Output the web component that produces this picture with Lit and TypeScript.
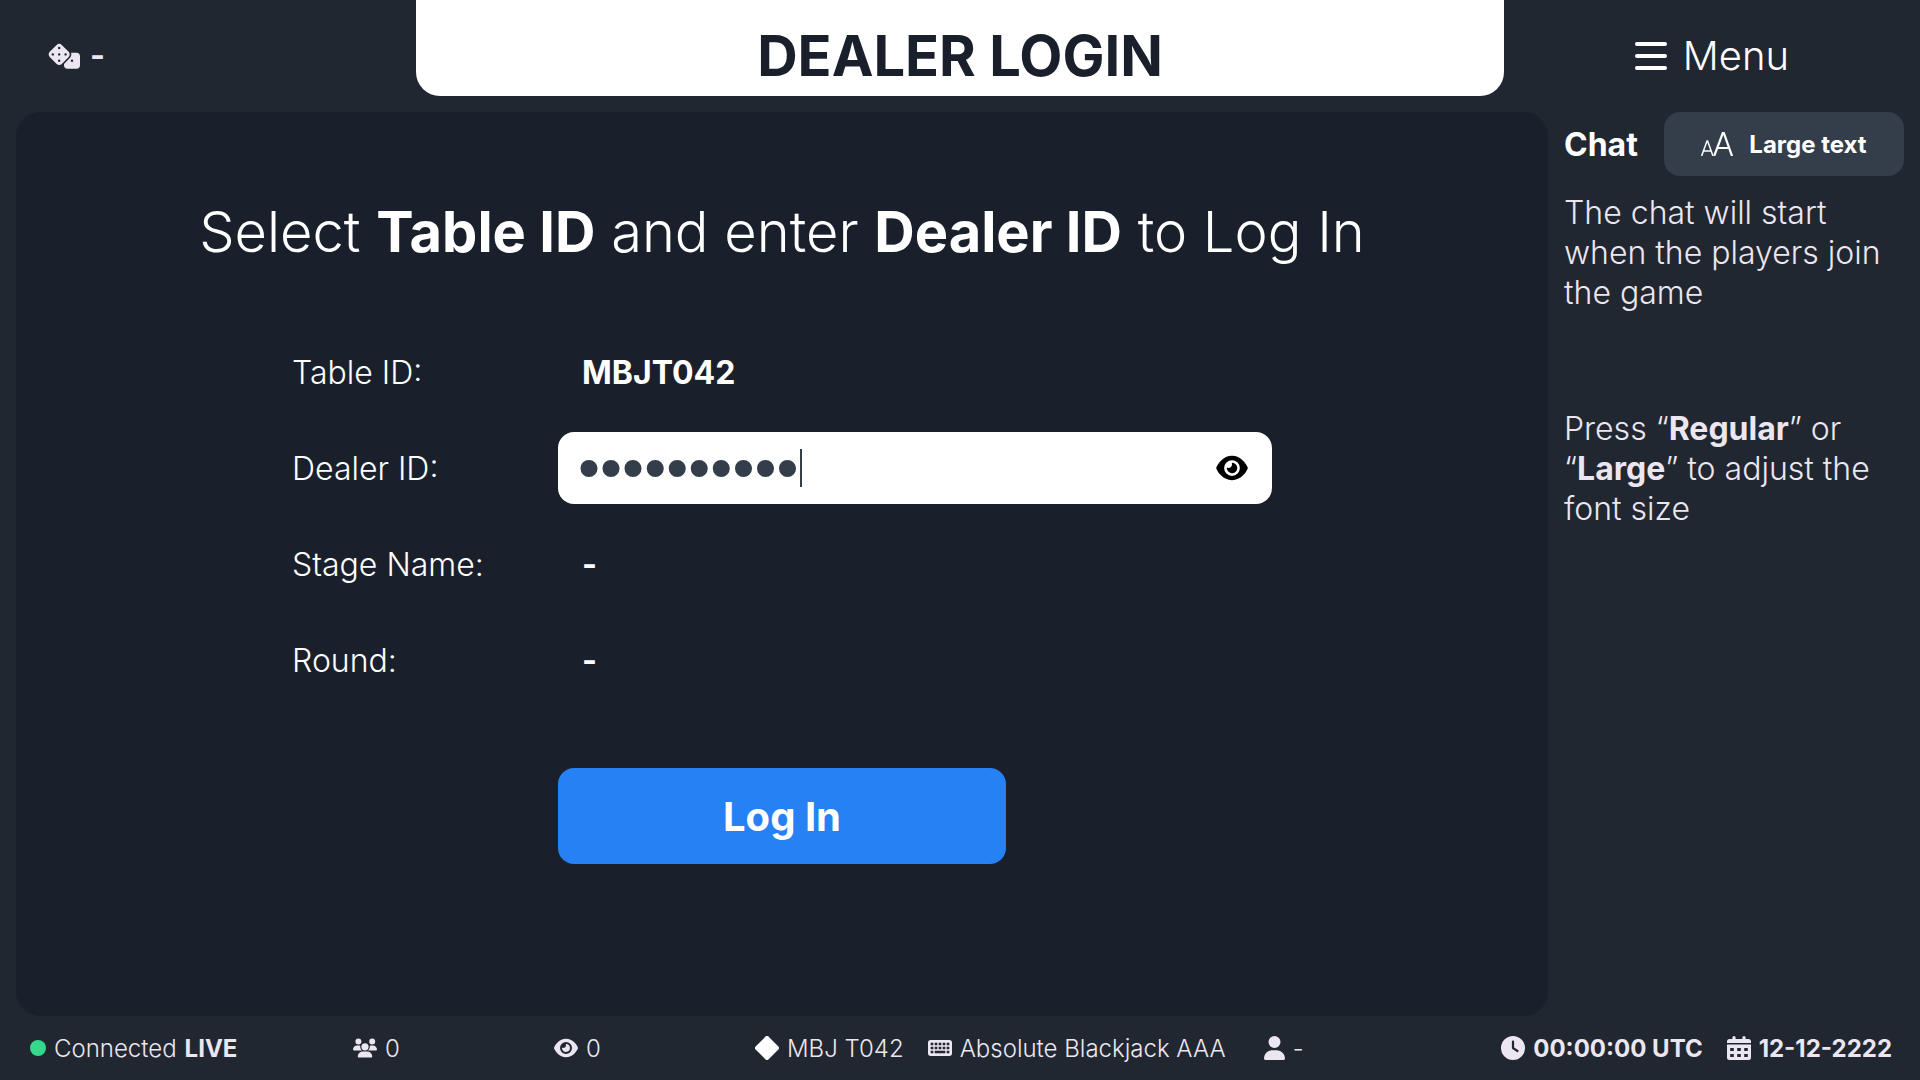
import { LitElement, html, css, svg } from "lit";
import { customElement, state } from "lit/decorators.js";

const eye = svg`<path d="M288 32c-80.8 0-145.5 36.8-192.6 80.6C48.6 156 17.3 208 2.5 243.7c-3.3 7.9-3.3 16.7 0 24.6C17.3 304 48.6 356 95.4 399.4C142.5 443.2 207.2 480 288 480s145.5-36.8 192.6-80.6c46.8-43.5 78.1-95.4 93-131.1c3.3-7.9 3.3-16.7 0-24.6c-14.9-35.7-46.2-87.7-93-131.1C433.5 68.8 368.8 32 288 32zM144 256a144 144 0 1 1 288 0 144 144 0 1 1 -288 0zm144-64c0 35.3-28.7 64-64 64c-7.1 0-13.9-1.2-20.3-3.3c-5.5-1.8-11.9 1.6-11.7 7.4c.3 6.9 1.3 13.8 3.2 20.7c13.7 51.2 66.4 81.6 117.6 67.9s81.6-66.4 67.9-117.6c-11.1-41.5-47.8-69.4-88.6-71.1c-5.8-.2-9.2 6.1-7.4 11.7c2.1 6.4 3.3 13.2 3.3 20.3z"/>`;
const dice = svg`<path d="M274.9 34.3c-28.1-28.1-73.7-28.1-101.8 0L34.3 173.1c-28.1 28.1-28.1 73.7 0 101.8L173.1 413.7c28.1 28.1 73.7 28.1 101.8 0L413.7 274.9c28.1-28.1 28.1-73.7 0-101.8L274.9 34.3zM200 224a24 24 0 1 1 48 0 24 24 0 1 1 -48 0zM96 200a24 24 0 1 1 0 48 24 24 0 1 1 0-48zM224 376a24 24 0 1 1 0-48 24 24 0 1 1 0 48zM352 200a24 24 0 1 1 0 48 24 24 0 1 1 0-48zM224 120a24 24 0 1 1 0-48 24 24 0 1 1 0 48zm96 328c0 35.3 28.7 64 64 64l192 0c35.3 0 64-28.7 64-64l0-192c0-35.3-28.7-64-64-64l-114.3 0c11.6 36 3.1 77-25.4 105.5L320 413.8l0 34.2zM480 328a24 24 0 1 1 0 48 24 24 0 1 1 0-48z"/>`;
const users = svg`<path d="M144 0a80 80 0 1 1 0 160A80 80 0 1 1 144 0zM512 0a80 80 0 1 1 0 160A80 80 0 1 1 512 0zM0 298.7C0 239.8 47.8 192 106.7 192l42.7 0c15.9 0 31 3.5 44.6 9.7c-1.3 7.2-1.9 14.7-1.9 22.3c0 38.2 16.8 72.5 43.3 96c-.2 0-.4 0-.7 0L21.3 320C9.6 320 0 310.4 0 298.7zM405.3 320c-.2 0-.4 0-.7 0c26.6-23.5 43.3-57.8 43.3-96c0-7.6-.7-15-1.9-22.3c13.6-6.3 28.7-9.7 44.6-9.7l42.7 0C592.2 192 640 239.8 640 298.7c0 11.8-9.6 21.3-21.3 21.3l-213.3 0zM224 224a96 96 0 1 1 192 0 96 96 0 1 1 -192 0zM128 485.3C128 411.7 187.7 352 261.3 352l117.3 0C452.3 352 512 411.7 512 485.3c0 14.7-11.9 26.7-26.7 26.7l-330.7 0c-14.7 0-26.7-11.9-26.7-26.7z"/>`;
const clock = svg`<path d="M256 0a256 256 0 1 1 0 512A256 256 0 1 1 256 0zM232 120l0 136c0 8 4 15.5 10.7 20l96 64c11 7.4 25.9 4.4 33.3-6.7s4.4-25.9-6.7-33.3L280 243.2 280 120c0-13.3-10.7-24-24-24s-24 10.7-24 24z"/>`;
const user = svg`<path d="M224 256A128 128 0 1 0 224 0a128 128 0 1 0 0 256zm-45.7 48C79.8 304 0 383.8 0 482.3C0 498.7 13.3 512 29.7 512l388.6 0c16.4 0 29.7-13.3 29.7-29.7C448 383.8 368.2 304 269.7 304l-91.4 0z"/>`;
const calendar = svg`<path fill-rule="evenodd" d="M7 0a1.6 1.6 0 0 1 1.6 1.6V3h6.8V1.600a1.600 1.600 0 0 1 3.200 0V3H21.500A2.500 2.500 0 0 1 24 5.500V7H0V5.500A2.500 2.500 0 0 1 2.500 3H5.400V1.600A1.600 1.600 0 0 1 7 0zM0 8.500H24V21.500A2.500 2.500 0 0 1 21.500 24H2.500A2.500 2.500 0 0 1 0 21.500zM3.200 12v3h3.600v-3zM10.200 12v3h3.600v-3zM17.200 12v3h3.600v-3zM3.200 18v3h3.600v-3zM10.200 18v3h3.600v-3zM17.200 18v3h3.600v-3z"/>`;
const keyboard = svg`<path fill-rule="evenodd" d="M64 0H512a64 64 0 0 1 64 64V320a64 64 0 0 1-64 64H64a64 64 0 0 1-64-64V64A64 64 0 0 1 64 0zM64 64h64v64H64zM160 64h64v64h-64zM256 64h64v64h-64zM352 64h64v64h-64zM448 64h64v64h-64zM64 160h64v64H64zM160 160h64v64h-64zM256 160h64v64h-64zM352 160h64v64h-64zM448 160h64v64h-64zM64 256h64v64H64zM160 256h256v64H160zM448 256h64v64h-64z"/>`;
const diamond = svg`<path d="M10.600.6a2 2 0 0 1 2.800 0l10 10a2 2 0 0 1 0 2.800l-10 10a2 2 0 0 1-2.800 0l-10-10a2 2 0 0 1 0-2.800z"/>`;
const bars = svg`<rect width="32" height="4" rx="2"/><rect y="12" width="32" height="4" rx="2"/><rect y="24" width="32" height="4" rx="2"/>`;
const textSize = svg`<path fill="none" stroke="currentColor" stroke-width="2.200" d="M13.200 24 21.800 1h1L31 24M16.300 16h12"/><path fill="none" stroke="currentColor" stroke-width="1.500" d="M.6 24 6 9h.6L12 24M2.600 19h7.600"/>`;

@customElement("app-root")
export class AppRoot extends LitElement {
  @state() private revealed = false;
  @state() private large = false;

  static styles = css`
    :host {
      display: flex;
      flex-direction: column;
      min-height: 100vh;
      background: #212731;
      color: #fff;
      font-family: Inter, "Liberation Sans", sans-serif;
      font-size: 32px;
      font-weight: 300;
      line-height: 40px;
    }
    *, *::before { box-sizing: border-box; }
    h1, h2, h3, p { margin: 0; }
    button { font: inherit; color: inherit; border: 0; padding: 0; background: none; cursor: pointer; }
    b { font-weight: 700; }
    svg { display: block; flex: none; fill: currentColor; }

    .top { display: grid; grid-template-columns: 416px 1fr 416px; height: 112px; }
    .game { display: flex; align-items: center; gap: 10px; height: 112px; padding-left: 48px; color: #ece6f0; font-weight: 700; }
    .title {
      height: 96px; line-height: 112px; border-radius: 0 0 24px 24px; background: #fff;
      color: #1a202b; font-size: 56px; font-weight: 700; text-align: center;
    }
    .menu { display: flex; align-items: center; justify-content: center; gap: 16px; font-size: 40px; line-height: 48px; }

    .body { flex: 1; display: grid; grid-template-columns: 1fr 340px; gap: 16px; padding: 0 16px; }
    .panel { display: flex; flex-direction: column; align-items: center; border-radius: 24px; background: #1a202b; padding-top: 84px; }
    .lead { font-size: 56px; font-weight: 300; line-height: 72px; }
    .form { display: grid; grid-template-columns: 266px 448px 266px; margin-top: 56px; }
    .row { display: grid; grid-template-columns: subgrid; grid-column: 1 / -1; align-items: center; height: 96px; }
    .name, .value { padding-top: 2px; }
    .value { padding-left: 24px; font-weight: 700; }
    .field {
      position: relative; grid-column: 2 / 4; display: flex; align-items: center; height: 72px;
      padding: 0 24px 0 20px; border-radius: 16px; background: #fff;
    }
    .input {
      flex: 1; min-width: 0; height: 72px; border: 0; padding: 0 0 2px; outline: 0; background: none;
      color: #343e4a; font: inherit;
    }
    .input[type="password"] { font-family: "Liberation Sans", sans-serif; font-size: 63px; }
    .caret { position: absolute; left: 242px; top: 17px; width: 2px; height: 38px; background: #343e4a; }
    .reveal { color: #000; }
    .login {
      grid-column: 2; height: 96px; margin-top: 60px; padding-top: 2px; border-radius: 16px; background: #2682f4;
      font-size: 40px; font-weight: 700;
    }

    .chat { display: flex; flex-direction: column; color: #ece6f0; }
    .chat-head { display: flex; align-items: center; justify-content: space-between; color: #fff; }
    .chat-title { padding-top: 2px; font-size: 32px; font-weight: 700; }
    .size {
      display: flex; align-items: center; justify-content: center; gap: 16px; width: 240px; height: 64px;
      border-radius: 16px; background: #343e4a; font-size: 24px; font-weight: 700;
    }
    .note { margin-top: 17px; }
    .hint { margin-top: 96px; }

    .status {
      display: grid; grid-template-columns: 323px 201px 201px 1fr auto; align-items: center; height: 64px;
      padding: 0 28px 0 30px; color: #ece6f0; font-size: 24px; line-height: 32px;
    }
    .group { display: flex; align-items: center; gap: 24px; }
    .item { display: flex; align-items: center; gap: 8px; white-space: nowrap; }
    .text { padding-top: 1px; }
    .dot { width: 16px; height: 16px; border-radius: 50%; background: #35d98b; }
    .gem { color: #fff; }
    .dealer { margin-left: 14px; }
    .strong { font-weight: 700; }
  `;

  render() {
    return html`
      <header class="top">
        <div class="game">
          <svg width="32" height="26" viewBox="0 0 640 512" aria-hidden="true">${dice}</svg><span>-</span>
        </div>
        <h1 class="title">DEALER LOGIN</h1>
        <button class="menu" type="button">
          <svg width="32" height="28" viewBox="0 0 32 28" aria-hidden="true">${bars}</svg><span>Menu</span>
        </button>
      </header>
      <div class="body">
        <main class="panel">
          <h2 class="lead">Select <b>Table ID</b> and enter <b>Dealer ID</b> to Log In</h2>
          <form class="form" @submit=${(e: Event) => e.preventDefault()}>
            <div class="row"><span class="name">Table ID:</span><span class="value">MBJT042</span></div>
            <div class="row">
              <label class="name" for="dealer">Dealer ID:</label>
              <div class="field">
                <input class="input" id="dealer" type=${this.revealed ? "text" : "password"} value="0123456789" autocomplete="off" />
                <span class="caret" aria-hidden="true"></span>
                <button class="reveal" type="button" aria-label="Show ID" @click=${() => (this.revealed = !this.revealed)}>
                  <svg width="32" height="28" viewBox="0 0 576 512" aria-hidden="true">${eye}</svg>
                </button>
              </div>
            </div>
            <div class="row"><span class="name">Stage Name:</span><span class="value">-</span></div>
            <div class="row"><span class="name">Round:</span><span class="value">-</span></div>
            <button class="login" type="submit">Log In</button>
          </form>
        </main>
        <aside class="chat">
          <div class="chat-head">
            <h3 class="chat-title">Chat</h3>
            <button class="size" type="button" aria-pressed=${this.large} @click=${() => (this.large = !this.large)}>
              <svg width="32" height="24" viewBox="0 0 32 24" aria-hidden="true">${textSize}</svg><span class="text">Large text</span>
            </button>
          </div>
          <p class="note">The chat will start when the players join the game</p>
          <p class="hint">Press “<b>Regular</b>” or “<b>Large</b>” to adjust the font size</p>
        </aside>
      </div>
      <footer class="status">
        <div class="item"><span class="dot"></span><span class="text">Connected</span><span class="text strong">LIVE</span></div>
        <div class="item"><svg width="24" height="20" viewBox="0 0 640 512" aria-hidden="true">${users}</svg><span class="text">0</span></div>
        <div class="item"><svg width="24" height="22" viewBox="0 0 576 512" aria-hidden="true">${eye}</svg><span class="text">0</span></div>
        <div class="group">
          <div class="item"><svg class="gem" width="24" height="24" viewBox="0 0 24 24" aria-hidden="true">${diamond}</svg><span class="text">MBJ T042</span></div>
          <div class="item"><svg width="24" height="16" viewBox="0 0 576 384" aria-hidden="true">${keyboard}</svg><span class="text">Absolute Blackjack AAA</span></div>
          <div class="item dealer"><svg width="21" height="24" viewBox="0 0 448 512" aria-hidden="true">${user}</svg><span class="text">-</span></div>
        </div>
        <div class="group strong">
          <div class="item"><svg width="24" height="24" viewBox="0 0 512 512" aria-hidden="true">${clock}</svg><span class="text">00:00:00 UTC</span></div>
          <div class="item"><svg width="24" height="24" viewBox="0 0 24 24" aria-hidden="true">${calendar}</svg><span class="text">12-12-2222</span></div>
        </div>
      </footer>
    `;
  }
}
